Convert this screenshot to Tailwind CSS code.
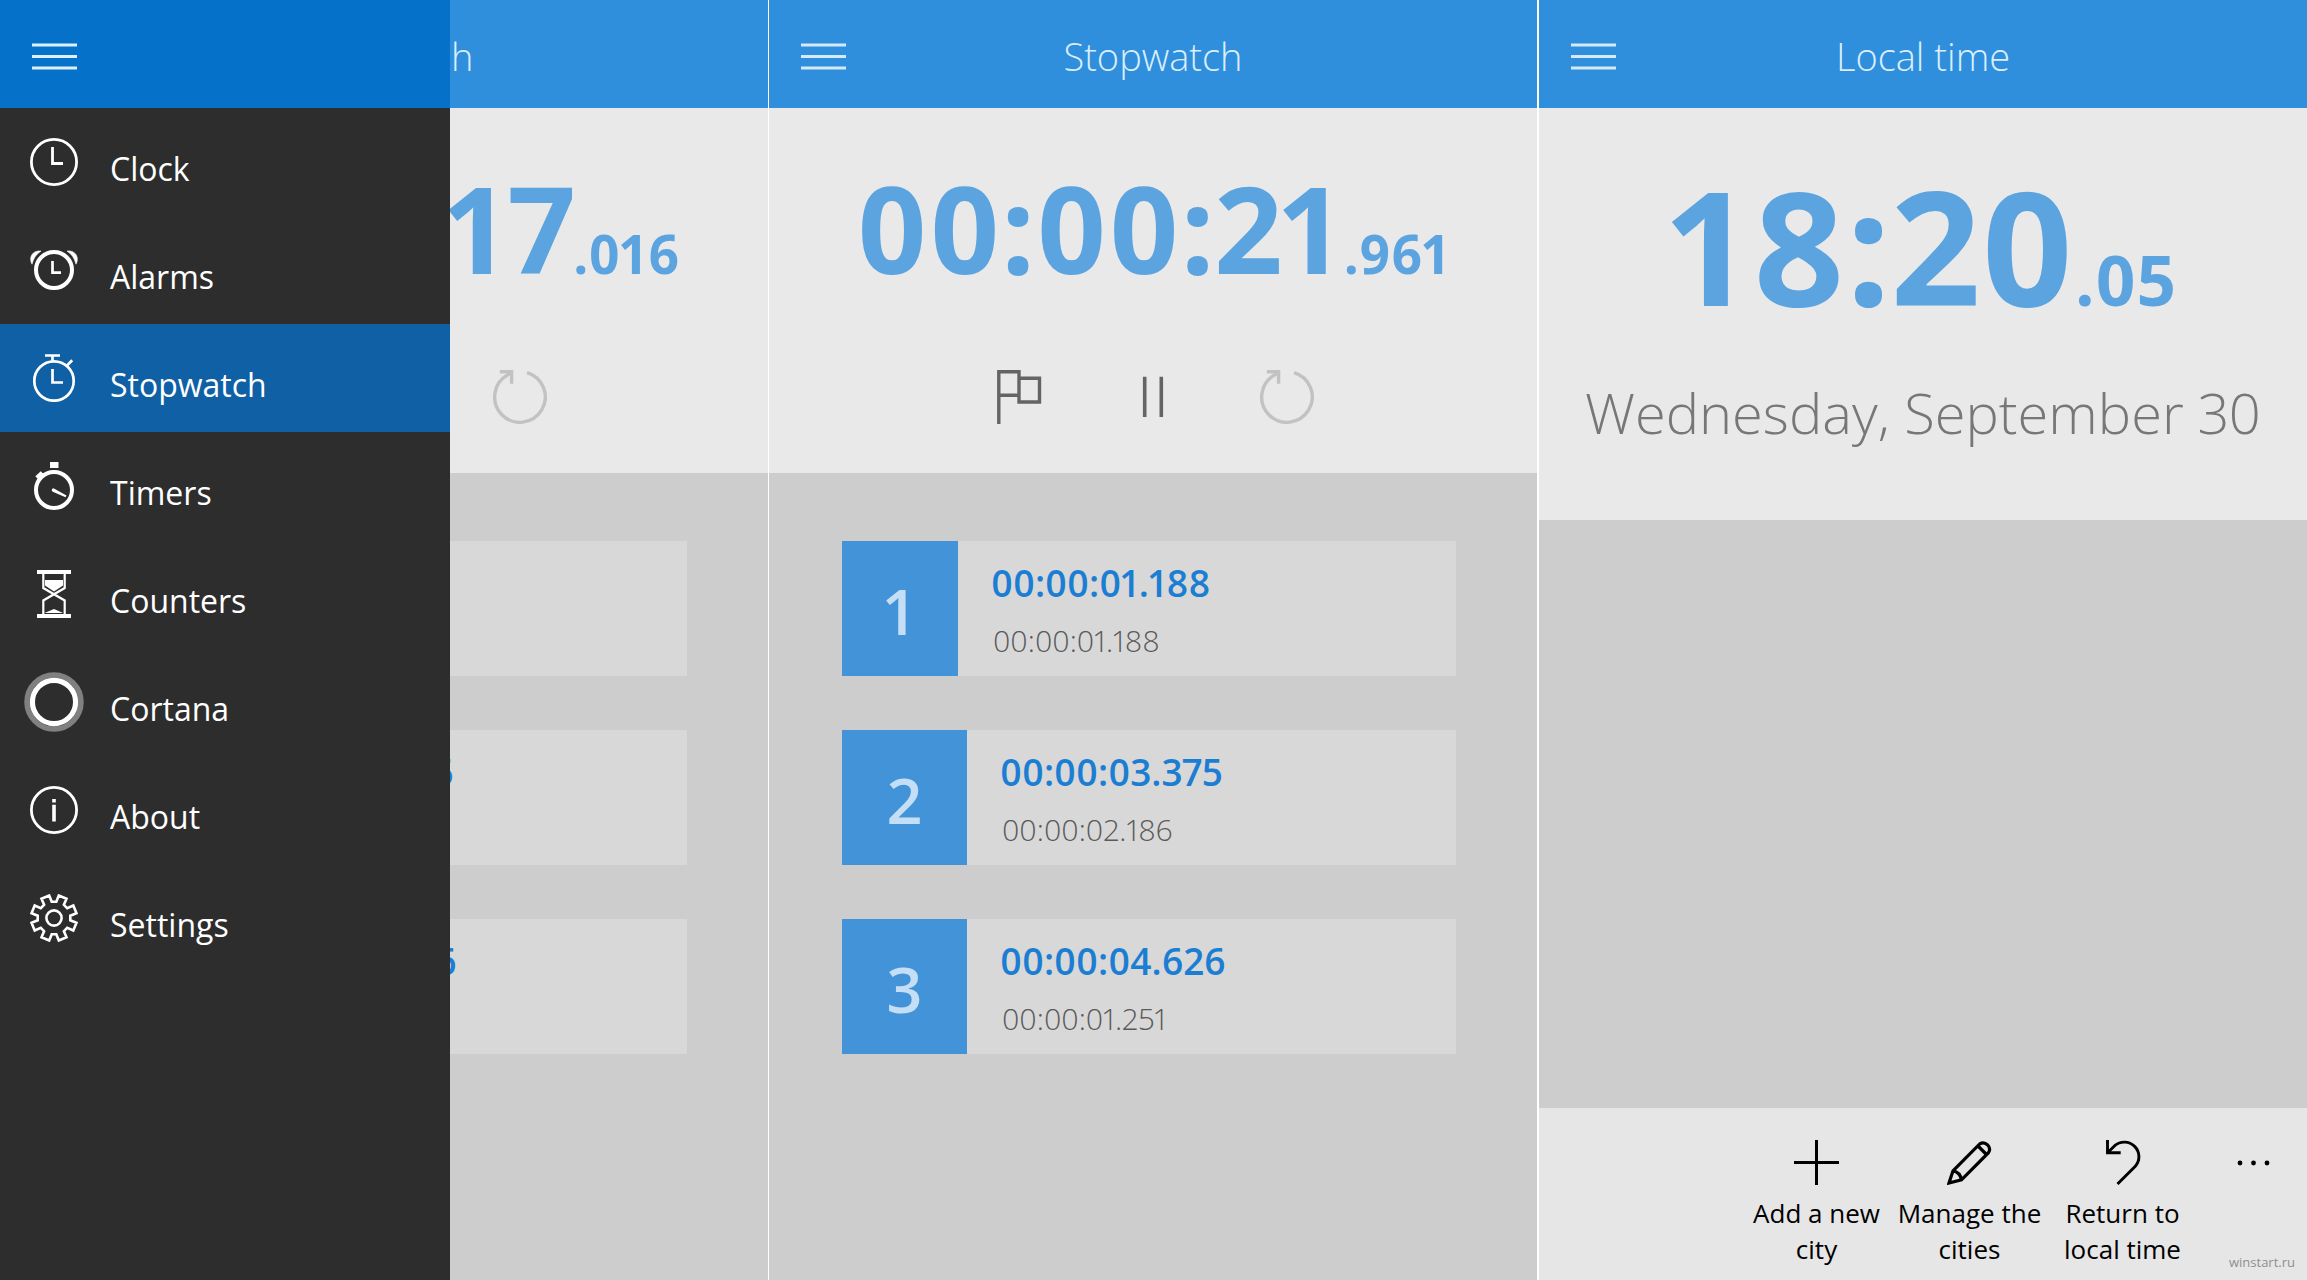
<!DOCTYPE html>
<html lang="en">
<head>
  <meta charset="UTF-8">
  <meta name="viewport" content="width=device-width, initial-scale=1.0">
  <title>Alarms &amp; Clock</title>
  <script src="https://cdn.jsdelivr.net/npm/@tailwindcss/browser@4"></script>
</head>
<body class="bg-[#cdcdcd] font-['Open_Sans','Noto_Sans',sans-serif] proportional-nums">
  <div class="grid grid-cols-3 min-h-screen">

    <!-- Stopwatch with the menu open -->
    <section class="flex border-r border-white min-w-0">
      <!-- Menu -->
      <nav class="w-[450px] shrink-0 bg-[#2d2d2d] text-white text-[32px] leading-[48px]">
        <div class="h-[108px] bg-[#0671c8] flex items-center pt-1 pl-8">
          <button aria-label="Close menu">
            <svg class="w-[45px] h-[27px]" viewBox="0 0 45 27" stroke="#dceffc" stroke-width="3"><path d="M0 2h45M0 13.5h45M0 25h45"/></svg>
          </button>
        </div>
        <a href="#clock" class="h-[108px] px-[30px] flex items-center gap-8">
          <svg class="size-12" viewBox="0 0 48 48" fill="none" stroke="currentColor" stroke-width="2.8"><circle cx="24" cy="24" r="22.6"/><path d="M22.5 9v16.5H33"/></svg>
          <span class="pt-3.5">Clock</span>
        </a>
        <a href="#alarms" class="h-[108px] px-[30px] flex items-center gap-8">
          <svg class="size-12" viewBox="0 0 48 48" fill="none" stroke="currentColor">
            <circle cx="24" cy="24" r="18" stroke-width="4"/><path d="M22.5 15v11.7H31" stroke-width="2.7"/>
            <path d="M2 18.2C-1.5 12 2 4 11 5 6.5 8 3.5 12 2 18.2ZM46 18.2C49.5 12 46 4 37 5 41.5 8 44.5 12 46 18.2Z" fill="currentColor" stroke-width=".6"/>
          </svg>
          <span class="pt-3.5">Alarms</span>
        </a>
        <a href="#stopwatch" class="h-[108px] px-[30px] flex items-center gap-8 bg-[#0f60a5]">
          <svg class="size-12" viewBox="0 0 48 48" fill="none" stroke="currentColor" stroke-width="2.7"><circle cx="24" cy="27" r="19.7"/><path d="M15 1.5h15M22.5 1.5V8M36.5 12l5.7-5.7M22.5 15v13.5H33"/></svg>
          <span class="pt-3.5">Stopwatch</span>
        </a>
        <a href="#timers" class="h-[108px] px-[30px] flex items-center gap-8">
          <svg class="size-12" viewBox="0 0 48 48" fill="none" stroke="currentColor">
            <circle cx="24" cy="28" r="18" stroke-width="4"/><path d="M20 0h8.500v6H20z" fill="currentColor" stroke="none"/>
            <path d="M6.500 15.500l5.500-5M9 13l3 3" stroke-width="3.500"/>
            <path d="M23.500 26.200L36.500 33.500 35.500 35.200 22.800 29.800A1.900 1.900 0 0 1 23.500 26.200Z" fill="currentColor" stroke="none"/>
          </svg>
          <span class="pt-3.5">Timers</span>
        </a>
        <a href="#counters" class="h-[108px] px-[30px] flex items-center gap-8">
          <svg class="size-12" viewBox="0 0 48 48" fill="none" stroke="currentColor">
            <path d="M7 2h34M7 46h34" stroke-width="4"/>
            <path d="M13.300 4V18L34.700 30.500V44M34.700 4V18L13.300 30.500V44" stroke-width="2.200"/>
            <path d="M15 10h18v5.500L24 21.500 15 15.500ZM14.500 43l9.500-4 9 4z" fill="currentColor" stroke="none"/>
          </svg>
          <span class="pt-3.5">Counters</span>
        </a>
        <a href="#cortana" class="h-[108px] px-[30px] flex items-center gap-8">
          <svg class="size-12 overflow-visible" viewBox="0 0 48 48" fill="none"><circle cx="24" cy="24" r="27" stroke="#808080" stroke-width="5.500"/><circle cx="24" cy="24" r="21.600" stroke="#fff" stroke-width="5.200"/></svg>
          <span class="pt-3.5">Cortana</span>
        </a>
        <a href="#about" class="h-[108px] px-[30px] flex items-center gap-8">
          <svg class="size-12" viewBox="0 0 48 48" fill="none" stroke="currentColor"><circle cx="24" cy="24" r="22.600" stroke-width="2.800"/><path d="M24 13v3.500M24 18.800V35.500" stroke-width="3.600"/></svg>
          <span class="pt-3.5">About</span>
        </a>
        <a href="#settings" class="h-[108px] px-[30px] flex items-center gap-8">
          <svg class="size-12" viewBox="0 0 48 48" fill="none" stroke="currentColor" stroke-width="2.600">
            <circle cx="24" cy="24" r="7.600"/>
            <path d="M26.300 7.700L28.800 1.500 36.500 4.700 33.900 10.800 37.200 14.100 43.300 11.500 46.500 19.200 40.300 21.700V26.300L46.500 28.800 43.300 36.500 37.200 33.900 33.900 37.200 36.500 43.300 28.800 46.500 26.300 40.300H21.700L19.200 46.500 11.500 43.300 14.100 37.200 10.800 33.900 4.700 36.500 1.500 28.800 7.700 26.300V21.700L1.500 19.200 4.700 11.500 10.800 14.100 14.100 10.800 11.500 4.700 19.200 1.500 21.700 7.700Z"/>
          </svg>
          <span class="pt-3.5">Settings</span>
        </a>
      </nav>

      <!-- Page behind the menu, its left part is cut off -->
      <div class="flex-1 min-w-0 overflow-hidden">
        <div class="-ml-[450px]">
          <header class="h-[108px] pt-1 bg-[#308fdc] flex items-center justify-center">
            <h2 class="text-[38px] leading-[60px] font-light text-[#d9eefb]">Stopwatch</h2>
          </header>
          <div class="bg-[#e9e9e9] pt-[60px] pb-[49px]">
            <div class="flex justify-center items-baseline font-bold text-[#5ca4df] whitespace-nowrap">
              <span class="text-[120px] leading-[120px]">00:00:17</span>
              <span class="text-[53px] leading-none">.016</span>
            </div>
            <div class="flex justify-end pr-[181px] mt-[82px]">
              <button class="w-[134px] flex justify-center text-[#c2c2c2]" aria-label="Reset">
                <svg class="size-[54px]" viewBox="0 0 54 54" fill="none" stroke="currentColor" stroke-width="3.400"><path d="M34 2.700A25.300 25.300 0 1 1 14.500 5L18 2.500"/><path d="M6.800 1.800H18.600V13.800"/></svg>
              </button>
            </div>
          </div>
          <ol class="flex flex-col gap-[54px] pt-[68px] pl-[73px] pr-[81px]">
            <li class="h-[135px] bg-[#d8d8d8]"></li>
            <li class="h-[135px] bg-[#d8d8d8] flex">
              <div class="w-[125px]"></div>
              <div class="pl-[33px] pt-[17px] text-[37px] leading-[50px] font-semibold text-[#1b7ed3]">00:00:03.375</div>
            </li>
            <li class="h-[135px] bg-[#d8d8d8] flex">
              <div class="w-[125px]"></div>
              <div class="pl-[33px] pt-[17px] text-[37px] leading-[50px] font-semibold text-[#1b7ed3]">00:00:04.626</div>
            </li>
          </ol>
        </div>
      </div>
    </section>

    <!-- Stopwatch running -->
    <section class="flex flex-col border-r border-white">
      <header class="h-[108px] pt-1 bg-[#308fdc] grid grid-cols-[1fr_auto_1fr] items-center">
        <button class="justify-self-start pl-8" aria-label="Menu">
          <svg class="w-[45px] h-[27px]" viewBox="0 0 45 27" stroke="#d4eaf9" stroke-width="3"><path d="M0 2h45M0 13.500h45M0 25h45"/></svg>
        </button>
        <h2 class="text-[38px] leading-[60px] font-light text-[#d9eefb]">Stopwatch</h2>
      </header>
      <div class="bg-[#e9e9e9] pt-[60px] pb-[49px]">
        <div class="flex justify-center items-baseline font-bold text-[#5ca4df] whitespace-nowrap">
          <span class="text-[120px] leading-[120px]">00:00:21</span>
          <span class="text-[53px] leading-none">.961</span>
        </div>
        <div class="flex justify-center mt-[82px] text-[#646464]">
          <button class="w-[134px] flex justify-center" aria-label="Lap">
            <svg class="size-[54px]" viewBox="0 0 54 54" fill="none" stroke="currentColor" stroke-width="3.400"><path d="M6.800 54V1.800H27V25.300H6.800M27 8.300H47.500V32H27V25"/></svg>
          </button>
          <button class="w-[134px] flex justify-center" aria-label="Pause">
            <svg class="size-[54px]" viewBox="0 0 54 54" fill="none" stroke="currentColor" stroke-width="3.600"><path d="M18.700 6.700V47M35.300 6.700V47"/></svg>
          </button>
          <button class="w-[134px] flex justify-center text-[#c2c2c2]" aria-label="Reset">
            <svg class="size-[54px]" viewBox="0 0 54 54" fill="none" stroke="currentColor" stroke-width="3.400"><path d="M34 2.700A25.300 25.300 0 1 1 14.500 5L18 2.500"/><path d="M6.800 1.800H18.600V13.800"/></svg>
          </button>
        </div>
      </div>
      <!-- Laps -->
      <ol class="flex flex-col gap-[54px] pt-[68px] pl-[73px] pr-[81px]">
        <li class="h-[135px] bg-[#d8d8d8] flex">
          <div class="w-[116px] bg-[#4293d8] text-[#c3def5] text-[63px] leading-[139px] font-semibold text-center">1</div>
          <div class="pl-[33px] pt-[17px]">
            <div class="text-[37px] leading-[50px] font-semibold text-[#1b7ed3]">00:00:01.188</div>
            <div class="pl-0.5 mt-2 text-[30px] leading-[50px] font-light text-[#5a5a5a]">00:00:01.188</div>
          </div>
        </li>
        <li class="h-[135px] bg-[#d8d8d8] flex">
          <div class="w-[125px] bg-[#4293d8] text-[#c3def5] text-[63px] leading-[139px] font-semibold text-center">2</div>
          <div class="pl-[33px] pt-[17px]">
            <div class="text-[37px] leading-[50px] font-semibold text-[#1b7ed3]">00:00:03.375</div>
            <div class="pl-0.5 mt-2 text-[30px] leading-[50px] font-light text-[#5a5a5a]">00:00:02.186</div>
          </div>
        </li>
        <li class="h-[135px] bg-[#d8d8d8] flex">
          <div class="w-[125px] bg-[#4293d8] text-[#c3def5] text-[63px] leading-[139px] font-semibold text-center">3</div>
          <div class="pl-[33px] pt-[17px]">
            <div class="text-[37px] leading-[50px] font-semibold text-[#1b7ed3]">00:00:04.626</div>
            <div class="pl-0.5 mt-2 text-[30px] leading-[50px] font-light text-[#5a5a5a]">00:00:01.251</div>
          </div>
        </li>
      </ol>
    </section>

    <!-- Local time -->
    <section class="relative flex flex-col border-l border-white">
      <header class="h-[108px] pt-1 bg-[#308fdc] grid grid-cols-[1fr_auto_1fr] items-center">
        <button class="justify-self-start pl-8" aria-label="Menu">
          <svg class="w-[45px] h-[27px]" viewBox="0 0 45 27" stroke="#d4eaf9" stroke-width="3"><path d="M0 2h45M0 13.500h45M0 25h45"/></svg>
        </button>
        <h2 class="text-[38px] leading-[60px] font-light text-[#d9eefb]">Local time</h2>
      </header>
      <div class="bg-[#e9e9e9] pt-[58px] pb-[68px]">
        <div class="flex justify-center items-baseline font-bold text-[#5ca4df] whitespace-nowrap">
          <span class="text-[158px] leading-[158px]">18:20</span>
          <span class="text-[69px] leading-none">.05</span>
        </div>
        <p class="mt-12 text-[56px] leading-[80px] font-light text-[#777] text-center whitespace-nowrap">Wednesday, September 30</p>
      </div>

      <!-- App bar -->
      <div class="mt-auto h-[172px] bg-[#e6e6e6] flex justify-end text-black text-[26px] leading-9">
        <button class="w-[153px] pt-8 flex flex-col items-center">
          <svg class="size-[45px] shrink-0" viewBox="0 0 45 45" fill="none" stroke="currentColor" stroke-width="3"><path d="M22.500 0v45M0 22.500h45"/></svg>
          <span class="mt-2.5">Add a new<br>city</span>
        </button>
        <button class="w-[153px] pt-8 flex flex-col items-center">
          <svg class="size-[45px] shrink-0" viewBox="0 0 45 45" fill="none" stroke="currentColor" stroke-width="3.200"><path d="M2 43L6 30.800 32.700 3.900A6.400 6.400 0 0 1 41.500 12.700L14.500 39.800ZM6 30.800Q13 32 14.500 39.800M31 6L39.500 14.500"/></svg>
          <span class="mt-2.5 whitespace-nowrap">Manage the<br>cities</span>
        </button>
        <button class="w-[153px] pt-8 flex flex-col items-center">
          <svg class="size-[45px] shrink-0" viewBox="0 0 45 45" fill="none" stroke="currentColor" stroke-width="2.900"><path d="M7.500 0V12.700H20.700M7.500 12.700L14.700 5.700A14.600 14.600 0 0 1 35.300 26.300L17.500 44"/></svg>
          <span class="mt-2.5">Return to<br>local time</span>
        </button>
        <button class="w-[108px] pt-8 flex flex-col items-center" aria-label="More">
          <svg class="size-[45px]" viewBox="0 0 45 45" fill="currentColor"><circle cx="9" cy="23" r="2.400"/><circle cx="22.500" cy="23" r="2.400"/><circle cx="36" cy="23" r="2.400"/></svg>
        </button>
      </div>
      <span class="absolute right-3 bottom-2 text-[13px] leading-5 text-[#8f8f8f]">winstart.ru</span>
    </section>

  </div>
</body>
</html>
